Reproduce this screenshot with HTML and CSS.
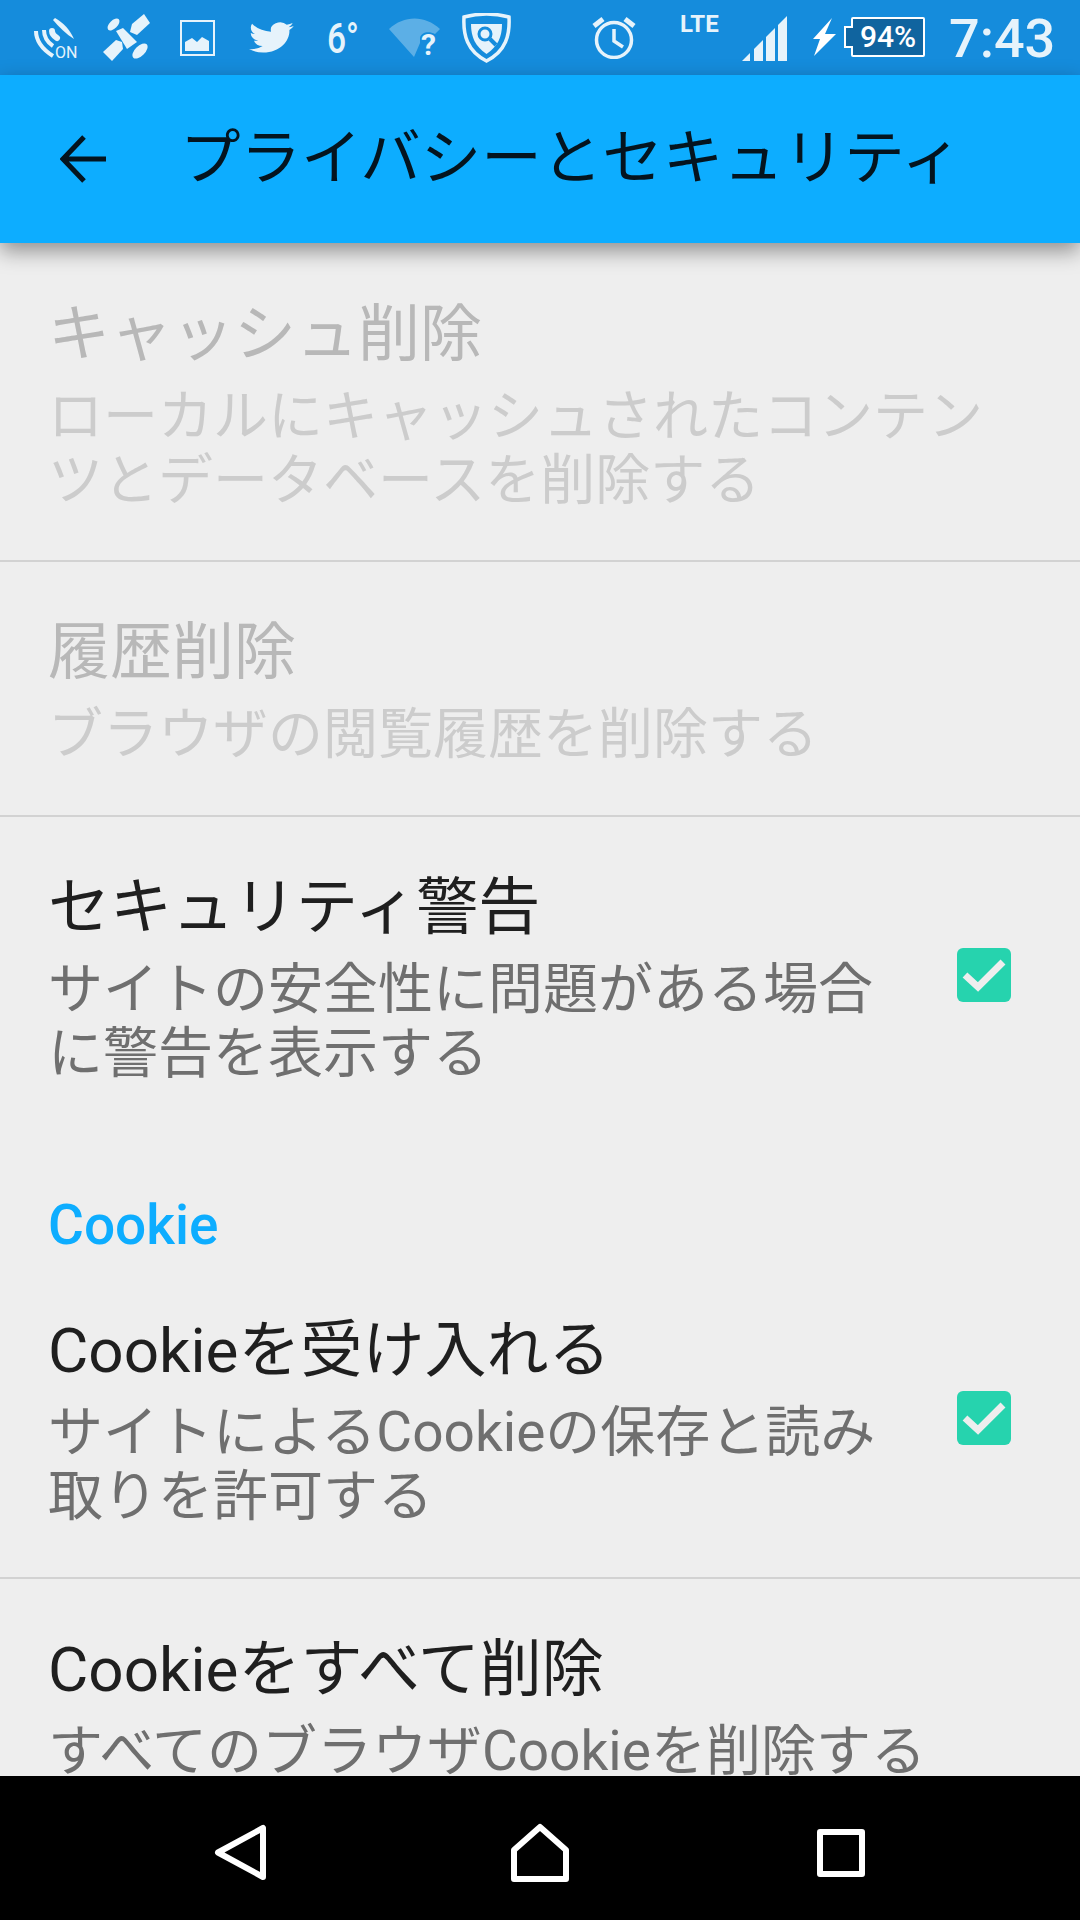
FILE: index.html
```html
<!DOCTYPE html>
<html lang="ja">
<head>
  <meta charset="UTF-8">
  <meta name="viewport" content="width=device-width, initial-scale=1.0">
  <title>プライバシーとセキュリティ</title>
  <link rel="stylesheet" href="styles.css">
</head>
<body>
  <div class="status-bar">
    <!-- NFC on -->
    <svg class="icon icon-nfc" viewBox="0 0 44 48">
      <path d="M22 1 C31 6 37 13 41 22 C33 17 26 10 20 3 Z" />
      <path class="line" d="M3 14 C3 23 9 32 20 39" />
      <path class="line" d="M11 13 C11 20 14 25 20 29" />
      <path class="line thick" d="M19 14 C19 17 21 19 24 21" />
      <text class="nfc-text" x="22" y="41">ON</text>
    </svg>
    <!-- satellite -->
    <svg class="icon icon-sat" viewBox="0 0 47 47">
      <ellipse cx="10.500" cy="10.500" rx="7.500" ry="4" transform="rotate(-45 10.500 10.500)" />
      <ellipse cx="37" cy="37" rx="9.500" ry="5" transform="rotate(-45 37 37)" />
      <path d="M29 10 L41 0 L47 9 L34 21 L27 18 Z" />
      <path d="M13 26 L19 28 L20 35 L9 47 L0 38 Z" />
      <path d="M13 17 L20 14 L34 28 L24 35 Z" />
    </svg>
    <!-- picture -->
    <svg class="icon icon-pic" viewBox="0 0 35 36">
      <path class="line thin" d="M1 1 H34 V35 H1 Z" />
      <path d="M5 31 V22 L12 18 L17 22 L22 17 L29 21 V31 Z" />
    </svg>
    <!-- twitter -->
    <svg class="icon icon-bird" viewBox="0 0 24 24" preserveAspectRatio="none">
      <path d="M23.950 4.570a10 10 0 0 1-2.820.770 4.960 4.960 0 0 0 2.160-2.720c-.950.550-2 .950-3.130 1.180a4.930 4.930 0 0 0-8.390 4.490C7.690 8.090 4.070 6.130 1.640 3.160a4.820 4.820 0 0 0-.660 2.470c0 1.710.870 3.210 2.190 4.100a4.900 4.900 0 0 1-2.230-.620v.060a4.920 4.920 0 0 0 3.950 4.830 5 5 0 0 1-2.210.080 4.940 4.940 0 0 0 4.600 3.420A9.870 9.870 0 0 1 0 19.540a14 14 0 0 0 7.560 2.210c9.050 0 14-7.500 14-13.980 0-.210 0-.420-.020-.630a9.940 9.940 0 0 0 2.410-2.570z" />
    </svg>
    <div class="temp">6°</div>
    <!-- wifi with question mark -->
    <svg class="icon icon-wifi" viewBox="0 0 51 48">
      <path class="faded" d="M0 11 C15 -3 36 -3 51 11 L46 16 C40 13 32 14 31 20 V25 L25 39 Z" />
      <text class="wifi-text" x="32" y="37">?</text>
    </svg>
    <!-- shield -->
    <svg class="icon icon-shield" viewBox="0 0 49 50">
      <path class="line thin2" d="M2 4 C17 0 32 0 47 4 C48 22 44 38 24.500 48 C5 38 1 22 2 4 Z" />
      <path d="M9 11 H40 C40 24 36 33 24.500 41 C13 33 9 24 9 11 Z" />
      <circle class="shield-glass" cx="23" cy="21" r="6" />
      <path class="shield-handle" d="M28 26 L34 32" />
    </svg>

    <!-- alarm -->
    <svg class="icon icon-alarm" viewBox="0 0 44 43">
      <circle class="line thin2" cx="22" cy="24" r="17.500" />
      <path class="line thin2" d="M22 13 V25 L31 31" />
      <path class="line thick2" d="M2 10 L11 3" />
      <path class="line thick2" d="M42 10 L33 3" />
    </svg>
    <div class="lte">LTE</div>
    <!-- signal -->
    <svg class="icon icon-signal" viewBox="0 0 45 45">
      <path d="M0 45 L8 37 V45 Z" />
      <path d="M12 45 V33 L21 24 V45 Z" />
      <path d="M24 45 V21 L33 12 V45 Z" />
      <path d="M36 45 V9 L45 0 V45 Z" />
    </svg>
    <!-- charging bolt -->
    <svg class="icon icon-bolt" viewBox="0 0 23 38">
      <path d="M19 0 L12 16 L23 16 L1 38 L7 21 L0 21 Z" />
    </svg>
    <!-- battery -->
    <div class="battery">
      <div class="battery-tip"></div>
      <div class="battery-body">94%</div>
    </div>
    <div class="clock">7:43</div>
  </div>

  <div class="toolbar">
    <svg class="back-arrow" viewBox="0 0 48 48">
      <path d="M46 24 H4 M24 2 L3 24 L24 46" />
    </svg>
    <div class="toolbar-title">プライバシーとセキュリティ</div>
  </div>

  <div class="settings">
    <div class="row disabled first">
      <div class="row-text">
        <div class="row-title">キャッシュ削除</div>
        <div class="row-summary">ローカルにキャッシュされたコンテンツとデータベースを削除する</div>
      </div>
    </div>
    <div class="row disabled">
      <div class="row-text">
        <div class="row-title">履歴削除</div>
        <div class="row-summary">ブラウザの閲覧履歴を削除する</div>
      </div>
    </div>
    <div class="row no-line">
      <div class="row-text narrow">
        <div class="row-title">セキュリティ警告</div>
        <div class="row-summary">サイトの安全性に問題がある場合に警告を表示する</div>
      </div>
      <div class="checkbox">
        <svg viewBox="0 0 54 54"><path d="M8 27 L21 39 L46 14" /></svg>
      </div>
    </div>
    <div class="section-header">Cookie</div>
    <div class="row cookie-row">
      <div class="row-text narrow">
        <div class="row-title">Cookieを受け入れる</div>
        <div class="row-summary">サイトによるCookieの保存と読み取りを許可する</div>
      </div>
      <div class="checkbox">
        <svg viewBox="0 0 54 54"><path d="M8 27 L21 39 L46 14" /></svg>
      </div>
    </div>
    <div class="row">
      <div class="row-text">
        <div class="row-title">Cookieをすべて削除</div>
        <div class="row-summary">すべてのブラウザCookieを削除する</div>
      </div>
    </div>
  </div>

  <div class="nav-bar">
    <svg class="nav-back" viewBox="0 0 53 57">
      <path d="M49 4 V53 L4 28.500 Z" />
    </svg>
    <svg class="nav-home" viewBox="0 0 58 59">
      <path d="M29 4 L55 27 V56 H3 V27 Z" />
    </svg>
    <svg class="nav-recent" viewBox="0 0 48 48">
      <path d="M3 3 H45 V45 H3 Z" />
    </svg>
  </div>
</body>
</html>
```

FILE: styles.css
```css
* {
  box-sizing: border-box;
}

body {
  margin: 0;
  width: 1080px;
  height: 1920px;
  overflow: hidden;
  display: flex;
  flex-direction: column;
  background-color: #eeeeee;
  font-family: Roboto, "Noto Sans CJK JP", sans-serif;
}

/* status bar */
.status-bar {
  height: 75px;
  flex-shrink: 0;
  display: flex;
  align-items: flex-start;
  background-color: #158cdc;
  color: #e6f3fb;
}

.icon {
  display: block;
  flex-shrink: 0;
  fill: #e6f3fb;
}

.line {
  fill: none;
  stroke: #e6f3fb;
  stroke-width: 4;
}

.line.thick {
  stroke-width: 6;
  stroke-linecap: round;
}

.line.thick2 {
  stroke-width: 5;
}

.line.thin {
  stroke-width: 2;
}

.line.thin2 {
  stroke-width: 3.500;
}

.icon-nfc {
  width: 44px;
  height: 48px;
  margin: 17px 0 0 33px;
}

.nfc-text {
  font-size: 16px;
  font-family: Roboto, sans-serif;
}

.icon-sat {
  width: 47px;
  height: 47px;
  margin: 14px 0 0 26px;
}

.icon-pic {
  width: 35px;
  height: 36px;
  margin: 20px 0 0 30px;
}

.icon-bird {
  width: 45px;
  height: 37px;
  margin: 19px 0 0 34px;
}

.temp {
  width: 40px;
  margin-left: 33px;
  margin-top: 14px;
  font-size: 42px;
  line-height: 50px;
  font-weight: 500;
  transform: scaleX(0.8);
  transform-origin: left;
}

.icon-wifi {
  width: 51px;
  height: 48px;
  margin: 18px 0 0 22px;
}

.faded {
  fill: #5cafe6;
}

.wifi-text {
  font-size: 30px;
  font-weight: 700;
  font-family: Roboto, sans-serif;
}

.icon-shield {
  width: 49px;
  height: 50px;
  margin: 13px 0 0 22px;
}

.shield-glass {
  fill: none;
  stroke: #158cdc;
  stroke-width: 3;
}

.shield-handle {
  fill: none;
  stroke: #158cdc;
  stroke-width: 4;
}

.icon-alarm {
  width: 44px;
  height: 43px;
  margin: 16px 0 0 81px;
}

.lte {
  width: 41px;
  margin: 10px 0 0 44px;
  font-size: 24px;
  line-height: 28px;
  font-weight: 700;
}

.icon-signal {
  width: 45px;
  height: 45px;
  margin: 16px 0 0 21px;
}

.icon-bolt {
  width: 23px;
  height: 38px;
  margin: 18px 0 0 26px;
  fill: #ffffff;
}

.battery {
  display: flex;
  align-items: center;
  width: 81px;
  height: 40px;
  margin: 17px 0 0 8px;
}

.battery-tip {
  width: 9px;
  height: 22px;
  margin-right: -2px;
  position: relative;
  z-index: 1;
  border: 2px solid #ffffff;
  border-right: none;
  background-color: #10649f;
}

.battery-body {
  flex: 1;
  height: 40px;
  border: 2px solid #ffffff;
  border-radius: 2px;
  background-color: #10649f;
  color: #ffffff;
  font-size: 30px;
  line-height: 36px;
  font-weight: 500;
  text-align: center;
  white-space: nowrap;
}

.clock {
  margin: 9px 0 0 24px;
  font-size: 54px;
  line-height: 60px;
  font-weight: 500;
}

/* toolbar */
.toolbar {
  height: 168px;
  flex-shrink: 0;
  position: relative;
  z-index: 1;
  display: flex;
  align-items: center;
  padding-left: 60px;
  background-color: #0dadff;
  box-shadow: 0 8px 20px rgba(0, 0, 0, 0.4);
}

.back-arrow {
  width: 48px;
  height: 48px;
  fill: none;
  stroke: #04141f;
  stroke-width: 5;
}

.toolbar-title {
  margin-left: 72px;
  font-size: 60.500px;
  line-height: 80px;
  color: #04141f;
}

/* settings list */
.settings {
  flex: 1;
  overflow: hidden;
}

.row {
  display: flex;
  align-items: flex-start;
  justify-content: space-between;
  padding: 51px 0 49px 48px;
  border-bottom: 2px solid #d2d2d2;
}

.row.first {
  padding-top: 52px;
  padding-bottom: 48px;
}

.row.no-line {
  padding-top: 51px;
  padding-bottom: 0;
  border-bottom: none;
}

.row.cookie-row {
  padding-top: 0;
}

.row-text {
  width: 950px;
}

.row-text.narrow {
  width: 840px;
}

.row-title {
  font-size: 62px;
  line-height: 80px;
  margin-bottom: 9px;
  color: #1f1f1f;
}

.row-summary {
  font-size: 55px;
  line-height: 64px;
  color: #6f6f6f;
}

.disabled .row-title {
  color: #b8b8b8;
}

.disabled .row-summary {
  color: #cccccc;
}

.section-header {
  padding: 0 0 0 48px;
  margin-top: 108px;
  margin-bottom: 54px;
  font-size: 55px;
  line-height: 64px;
  font-weight: 500;
  color: #0dadff;
}

.checkbox {
  width: 54px;
  height: 54px;
  margin: 80px 69px 0 0;
  flex-shrink: 0;
  border-radius: 6px;
  background-color: #26d3ae;
}

.checkbox svg {
  display: block;
  fill: none;
  stroke: #eeeeee;
  stroke-width: 7;
}

/* navigation bar */
.nav-bar {
  height: 144px;
  flex-shrink: 0;
  display: flex;
  align-items: center;
  padding-left: 214px;
  padding-top: 9px;
  background-color: #000000;
}

.nav-bar svg {
  display: block;
  fill: none;
  stroke: #ffffff;
  stroke-width: 6;
  stroke-linejoin: round;
}

.nav-back {
  width: 53px;
  height: 57px;
}

.nav-home {
  width: 58px;
  height: 59px;
  margin-left: 244px;
}

.nav-recent {
  width: 48px;
  height: 48px;
  margin-left: 248px;
}
```
